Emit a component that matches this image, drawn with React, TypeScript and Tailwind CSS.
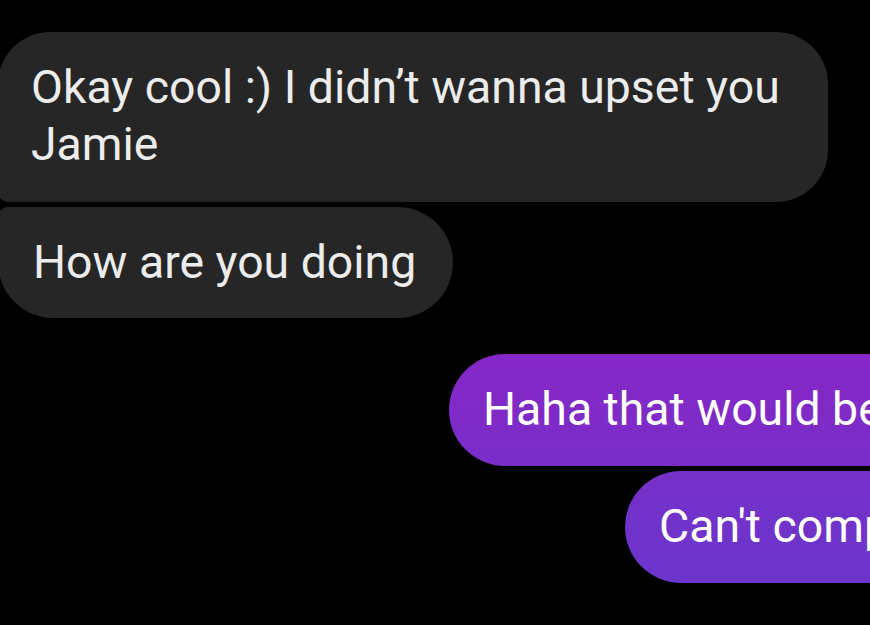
import React from 'react'

const font = { fontFamily: 'Roboto, "Noto Sans", sans-serif' }

export default function App() {
  return (
    <div className="w-[870px] h-[625px] bg-black overflow-hidden pt-[32px]" style={font}>
      <div className="flex flex-col items-start gap-[5px]">
        <div className="max-w-[830px] -ml-[2px] bg-[#262626] text-[#ececec] text-[46.4px] leading-[57px] pl-[33px] pr-[34px] pt-[27px] pb-[29px] rounded-tl-[52px] rounded-tr-[52px] rounded-br-[52px] rounded-bl-[10px]">
          Okay cool :) I didn’t wanna upset you Jamie
        </div>
        <div className="-ml-[2px] bg-[#262626] text-[#ececec] text-[46.4px] leading-[57px] pl-[35px] pr-[37px] pt-[27px] pb-[27px] rounded-tl-[10px] rounded-tr-[56px] rounded-br-[56px] rounded-bl-[56px]">
          How are you doing
        </div>
      </div>

      <div className="flex flex-col mt-[36px] gap-[5px]">
        <div className="ml-[449px] w-[600px] whitespace-nowrap bg-gradient-to-b from-[#8527c7] to-[#7a2dc8] text-white text-[46.4px] leading-[57px] pl-[34px] pt-[27px] pb-[28px] rounded-l-[56px]">
          Haha that would be amazing
        </div>
        <div className="ml-[625px] w-[400px] whitespace-nowrap bg-gradient-to-b from-[#7630c9] to-[#6b35cb] text-white text-[46.4px] leading-[57px] pl-[34px] pt-[27px] pb-[28px] rounded-l-[56px]">
          Can't complain
        </div>
      </div>
    </div>
  )
}
